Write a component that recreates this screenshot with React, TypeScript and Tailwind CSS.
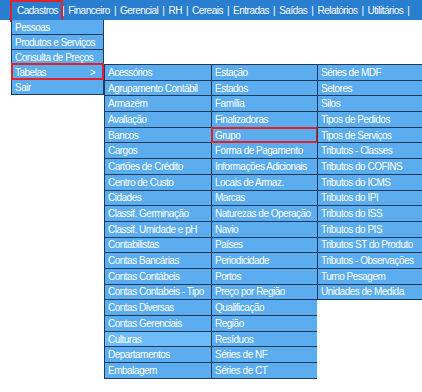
const topMenu = ['Cadastros', 'Financeiro', 'Gerencial', 'RH', 'Cereais', 'Entradas', 'Saídas', 'Relatórios', 'Utilitários'];

const cadastros = ['Pessoas', 'Produtos e Serviços', 'Consulta de Preços', 'Tabelas', 'Sair'];

const col1 = [
  'Acessórios', 'Agrupamento Contábil', 'Armazém', 'Avaliação', 'Bancos', 'Cargos', 'Cartões de Crédito',
  'Centro de Custo', 'Cidades', 'Classif. Germinação', 'Classif. Umidade e pH', 'Contabilistas',
  'Contas Bancárias', 'Contas Contábeis', 'Contas Contabeis - Tipo', 'Contas Diversas', 'Contas Gerenciais',
  'Culturas', 'Departamentos', 'Embalagem',
];

const col2 = [
  'Estação', 'Estados', 'Família', 'Finalizadoras', 'Grupo', 'Forma de Pagamento', 'Informações Adicionais',
  'Locais de Armaz.', 'Marcas', 'Naturezas de Operação', 'Navio', 'Países', 'Periodicidade', 'Portos',
  'Preço por Região', 'Qualificação', 'Região', 'Resíduos', 'Séries de NF', 'Séries de CT',
];

const col3 = [
  'Séries de MDF', 'Setores', 'Silos', 'Tipos de Pedidos', 'Tipos de Serviços', 'Tributos - Classes',
  'Tributos do COFINS', 'Tributos do ICMS', 'Tributos do IPI', 'Tributos do ISS', 'Tributos do PIS',
  'Tributos ST do Produto', 'Tributos - Observações', 'Turno Pesagem', 'Unidades de Medida',
];

const Cell = ({ label, marked, hover }: { label: string; marked?: boolean; hover?: boolean }) => (
  <div
    className={`relative h-[15.7px] flex items-center pl-[3px] border-l border-b border-[#1f3a5a] whitespace-nowrap ${
      hover ? 'bg-[#6dbbf7]' : 'bg-[#5badf0]'
    }`}
  >
    {label}
    {marked && <span className="absolute -left-px -top-px -right-px -bottom-px border-2 border-[#e0232b]" />}
  </div>
);

const SubColumn = ({ items, width }: { items: string[]; width: string }) => (
  <div className={`flex flex-col border-t border-[#1f3a5a] ${width}`}>
    {items.map((item) => (
      <Cell key={item} label={item} marked={item === 'Grupo'} hover={item === 'Culturas'} />
    ))}
  </div>
);

export default function App() {
  return (
    <div className="w-[422px] h-[392px] bg-white overflow-hidden text-white text-[10px] tracking-[-0.5px] font-['Liberation_Sans',Arial,sans-serif]">
      <div className="h-[20px] bg-[#2a7ed0] flex items-center pl-[17px] whitespace-nowrap">
        {topMenu.map((item, i) => (
          <span key={item} className="flex items-center">
            <span className="relative">
              {item}
              {i === 0 && <span className="absolute -left-[7px] -right-[5px] -top-[3px] -bottom-[4px] border-2 border-[#e0232b]" />}
            </span>
            <span className="mx-[4px]">|</span>
          </span>
        ))}
      </div>

      <div className="flex items-start pl-[11px]">
        <div className="w-[93px] flex flex-col">
          {cadastros.map((item) => (
            <div
              key={item}
              className="relative h-[15px] flex items-center justify-between pl-[3px] pr-[8px] bg-[#5badf0] border-x border-b border-[#1f3a5a] whitespace-nowrap"
            >
              <span>{item}</span>
              {item === 'Tabelas' && (
                <>
                  <span>&gt;</span>
                  <span className="absolute -left-px -top-[2px] -right-px -bottom-px border-2 border-[#e0232b]" />
                </>
              )}
            </div>
          ))}
        </div>

        <div className="mt-[44px] flex items-start">
          <SubColumn items={col1} width="w-[107px]" />
          <SubColumn items={col2} width="w-[106px]" />
          <SubColumn items={col3} width="w-[105px]" />
        </div>
      </div>
    </div>
  );
}
